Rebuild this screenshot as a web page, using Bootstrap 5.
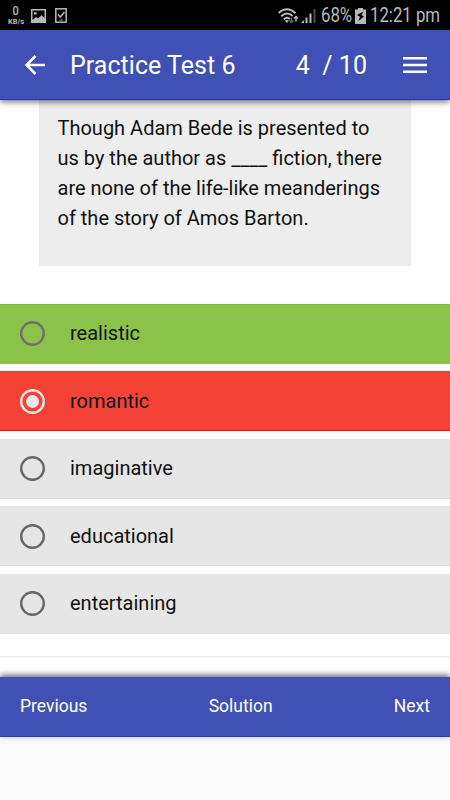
<!DOCTYPE html>
<html lang="en">
<head>
<meta charset="utf-8">
<meta name="viewport" content="width=device-width, initial-scale=1">
<title>Practice Test 6</title>
<link href="https://cdn.jsdelivr.net/npm/bootstrap@5.3.0/dist/css/bootstrap.min.css" rel="stylesheet">
<style>
body{font-family:Roboto,"Liberation Sans",sans-serif;height:800px;color:#111;background:#fafafa}
.status{height:30px;background:#000;color:#b9b9b9;font-size:19.5px;line-height:30px;padding:1px 10px 0 7px}
.clock,.pct{white-space:nowrap;transform-origin:left center;transform:scaleX(.86)}
.clock{width:70px;margin-left:4px}
.pct{width:31px;margin:0 3px 0 5px}
.signal{margin-left:2px}
.photo{margin-left:6px}
.check{margin-left:9px}
.speed{width:18px;font-size:7.5px;font-weight:700;line-height:9px}
.speed b{font-size:13px;line-height:12px;font-weight:500;transform:scaleX(.85)}
.appbar{height:70px;background:#3f51b5;border-bottom:1px solid #1c3aae;box-shadow:0 2px 6px rgba(0,0,0,.55);z-index:2;padding:1px 23px 0 25px}
.bar-text{font-size:25px;letter-spacing:.03px;line-height:36px;padding-top:2px}
.test-name{margin-left:25px}
.counter{margin-right:36px}
.content-pane{height:577px;background:#fff}
.question{width:372px;height:166px;margin-left:39px;background:#ededed;padding:13px 0 0 18.5px;font-size:20px;line-height:30px}
.options{padding-top:37.6px;gap:7.5px}
.option{height:60px;padding-left:20px;gap:25px;background:#e6e6e6;font-size:20px;border-bottom:1px solid #dcdcdc}
.option.right{background:#8bc34a;box-shadow:inset 0 1px #7fbb22;border-bottom-color:#8bc34a}
.option.wrong{background:#f44336;border-bottom-color:#f00d04}
.option svg{margin-top:1px}
.rule{height:1px;background:#ebebeb;margin-top:22.4px}
.footer-bar{height:60px;background:#3f51b5;border-bottom:1px solid #2740b0;box-shadow:0 -2px 6px rgba(0,0,0,.6);padding:0 20px;font-size:17.5px;z-index:2}
</style>
<script src="https://cdn.jsdelivr.net/npm/bootstrap@5.3.0/dist/js/bootstrap.bundle.min.js"></script>
</head>
<body class="d-flex flex-column overflow-hidden">
<div class="status d-flex align-items-center flex-shrink-0">
  <div class="speed d-flex flex-column align-items-center"><b>0</b><span>KB/s</span></div>
  <svg class="photo" width="15" height="14" viewBox="0 0 15 14"><path fill="#b9b9b9" fill-rule="evenodd" d="M0 0h15v14H0zM1.500 1.500v9.500l3.500-3 2 1.500 3.500-3.500 3 3V1.500zM3 3.200h2.600v2.400H3z"/></svg>
  <svg class="check" width="12" height="15" viewBox="0 0 12 15" fill="none" stroke="#b9b9b9"><rect x=".8" y=".8" width="10.400" height="13.400" stroke-width="1.500"/><path d="M3 6.500l2.300 2.500L9.500 4" stroke-width="1.500"/><path d="M4.500 12h3"/></svg>
  <svg class="ms-auto" width="21" height="16" viewBox="0 0 21 16" fill="none" stroke="#b9b9b9" stroke-width="1.900"><path d="M.6 5Q9 -2.500 17.400 5M3.200 8.200Q9 3 14.700 8M5.800 11.200Q9 8.400 12 11"/><path fill="#b9b9b9" stroke="none" d="M6.900 12.800Q9 11.200 11 12.800L9 15z"/><path d="M13.500 9.500v5m-2-2 2 2 2-2" stroke="#666" stroke-width="1.400"/><path d="M18 13.500v-5m-2 2 2-2 2 2" stroke-width="1.400"/></svg>
  <svg class="signal" width="15" height="16" viewBox="0 0 15 16" fill="#b9b9b9"><path d="M0 15l3-3v3zM4.500 9.500h2V15h-2zM8.500 5.500h2V15h-2z"/><path fill="#4b4b4b" d="M12.500 1h2v14h-2z"/></svg>
  <span class="pct">68%</span>
  <svg width="11" height="16" viewBox="0 0 11 16"><path fill="#b9b9b9" d="M3 0h5v1.500h3V16H0V1.500h3z"/><path d="M8.500 3.500L2 7l3 1.800L3.500 13l5.500-4.500-2.500-1.500z"/></svg>
  <span class="clock">12:21 pm</span>
</div>
<nav class="appbar d-flex align-items-center position-relative flex-shrink-0 text-white">
  <svg width="20" height="20" viewBox="0 0 20 20" fill="none" stroke="#fff" stroke-width="2.500"><path d="M20 10H2M10.500 1l-9 9 9 9"/></svg>
  <span class="bar-text test-name">Practice Test 6</span>
  <span class="bar-text ms-auto counter">4&nbsp; / 10</span>
  <svg width="24" height="16" viewBox="0 0 24 16" fill="#fff"><path d="M0 0h24v2.500H0zM0 6.700h24v2.500H0zM0 13.400h24v2.500H0z"/></svg>
</nav>
<main class="content-pane flex-shrink-0">
  <div class="question">Though Adam Bede is presented to<br>us by the author as ____ fiction, there<br>are none of the life-like meanderings<br>of the story of Amos Barton.</div>
  <div class="options d-flex flex-column">
    <div class="option right d-flex align-items-center"><svg width="25" height="25" viewBox="0 0 25 25"><circle cx="12.500" cy="12.500" r="11.300" fill="none" stroke="#707070" stroke-width="2.400"/></svg>realistic</div>
    <div class="option wrong d-flex align-items-center"><svg width="25" height="25" viewBox="0 0 25 25"><circle cx="12.500" cy="12.500" r="11.300" fill="none" stroke="#e9e9e9" stroke-width="2.400"/><circle cx="12.500" cy="12.500" r="6.500" fill="#e9e9e9"/></svg>romantic</div>
    <div class="option d-flex align-items-center"><svg width="25" height="25" viewBox="0 0 25 25"><circle cx="12.500" cy="12.500" r="11.300" fill="none" stroke="#666" stroke-width="2.400"/></svg>imaginative</div>
    <div class="option d-flex align-items-center"><svg width="25" height="25" viewBox="0 0 25 25"><circle cx="12.500" cy="12.500" r="11.300" fill="none" stroke="#666" stroke-width="2.400"/></svg>educational</div>
    <div class="option d-flex align-items-center"><svg width="25" height="25" viewBox="0 0 25 25"><circle cx="12.500" cy="12.500" r="11.300" fill="none" stroke="#666" stroke-width="2.400"/></svg>entertaining</div>
  </div>
  <div class="rule"></div>
</main>
<footer class="footer-bar d-flex align-items-center justify-content-between position-relative flex-shrink-0 text-white"><span>Previous</span><span>Solution</span><span>Next</span></footer>
</body>
</html>
